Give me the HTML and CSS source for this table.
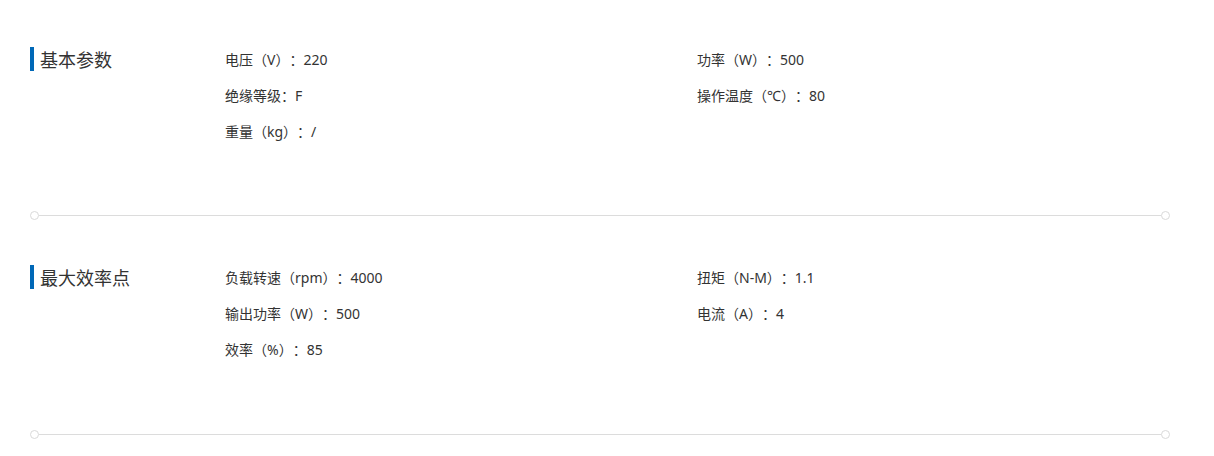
FILE: index.html
```html
<!DOCTYPE html>
<html lang="zh-Hans">
<head>
<meta charset="utf-8">
<link rel="stylesheet" href="styles.css">
</head>
<body>
<div class="page">
  <section class="section">
    <div class="content">
      <h2 class="title">基本参数</h2>
      <ul class="params">
        <li>电压（V）：220</li>
        <li>功率（W）：500</li>
        <li>绝缘等级：F</li>
        <li>操作温度（℃）：80</li>
        <li>重量（kg）：/</li>
      </ul>
    </div>
    <div class="divider"><span class="dot"></span><span class="line"></span><span class="dot"></span></div>
  </section>
  <section class="section">
    <div class="content">
      <h2 class="title">最大效率点</h2>
      <ul class="params">
        <li>负载转速（rpm）：4000</li>
        <li>扭矩（N-M）：1.1</li>
        <li>输出功率（W）：500</li>
        <li>电流（A）：4</li>
        <li>效率（%）：85</li>
      </ul>
    </div>
    <div class="divider"><span class="dot"></span><span class="line"></span><span class="dot"></span></div>
  </section>
</div>
</body>
</html>
```

FILE: styles.css
```css
* { box-sizing: border-box; }
html, body { margin: 0; padding: 0; background: #fff; }
body {
  font-family: "Noto Sans", "Noto Sans CJK SC", sans-serif;
  color: #333;
}
.page {
  width: 1140px;
  margin-left: 30px;
  padding-top: 42px;
}
.content {
  display: flex;
  align-items: flex-start;
}
.title {
  width: 195px;
  flex: none;
  margin: 0;
  margin-top: 5px;
  border-left: 4px solid #0068b7;
  padding-left: 6px;
  font-family: "Noto Sans CJK SC", sans-serif;
  font-weight: normal;
  font-size: 18px;
  line-height: 24px;
  height: 24px;
  color: #333;
  display: flex;
  align-items: center;
}
.params {
  list-style: none;
  margin: 0;
  padding: 0;
  display: grid;
  grid-template-columns: 472px 472px;
  font-size: 14px;
  line-height: 36px;
  text-spacing-trim: space-all;
}
.params li {
  font-family: "Noto Sans", "Noto Sans CJK SC", sans-serif;
  height: 36px;
  white-space: nowrap;
}
.divider {
  display: flex;
  align-items: center;
  margin-top: 61px;
  margin-bottom: 40px;
  height: 9px;
}
.section + .section .divider {
  margin-top: 62px;
  margin-bottom: 0;
}
.dot {
  width: 9px;
  height: 9px;
  border: 1px solid #d9d9d9;
  border-radius: 50%;
  flex: none;
}
.line {
  flex: 1;
  height: 1px;
  background: #dcdcdc;
}
```
